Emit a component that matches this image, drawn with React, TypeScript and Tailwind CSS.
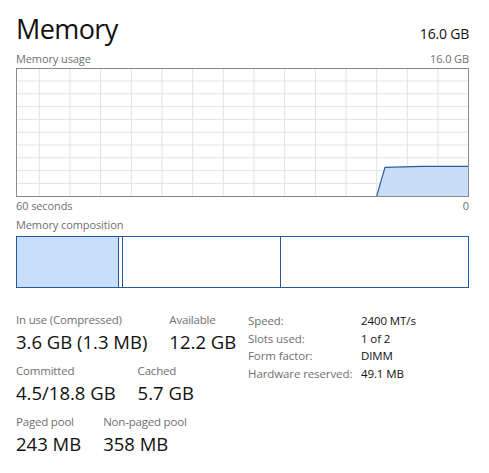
import React from "react";

const font = { fontFamily: '"Open Sans", "Noto Sans", sans-serif' };

function Chart() {
  const vx: number[] = [];
  for (let i = 0; i < 15; i++) vx.push(22.3 + 30.67 * i);
  const hy: number[] = [];
  for (let i = 0; i < 9; i++) hy.push(12 + 12.8 * i);
  return (
    <div className="w-[453px] h-[129px] border border-[#8c8c8c]">
      <svg width="451" height="127" viewBox="0 0 451 127" className="block">
        {vx.map((x) => (
          <line key={"v" + x} x1={x} y1={0} x2={x} y2={127} stroke="#e3e3e3" strokeWidth="1" />
        ))}
        {hy.map((y) => (
          <line key={"h" + y} x1={0} y1={y} x2={451} y2={y} stroke="#e3e3e3" strokeWidth="1" />
        ))}
        <path d="M359.7 127 L368 98.3 L404.7 97.3 L451 97.3 L451 127 Z" fill="#c5dcf7" fillOpacity="0.95" />
        <path d="M359.7 127 L368 98.3 L404.7 97.3 L451 97.3" fill="none" stroke="#2a5f9e" strokeWidth="1.2" />
      </svg>
    </div>
  );
}

function Stat({ label, value }: { label: string; value: string }) {
  return (
    <div className="flex flex-col">
      <div className="text-[11.5px] leading-[16px] tracking-[-0.2px] text-[#707070]">{label}</div>
      <div className="text-[18.5px] leading-[25px] text-[#111] mt-[1px]">{value}</div>
    </div>
  );
}

export default function App() {
  return (
    <div className="w-[489px] h-[473px] bg-white px-[16px] overflow-hidden" style={font}>
      <div className="flex justify-between items-baseline pt-[11px] w-[453px]">
        <div className="text-[27px] leading-[36px] tracking-[-0.6px] text-[#111]">Memory</div>
        <div className="text-[14px] leading-[20px] tracking-[-0.2px] text-[#111]">16.0 GB</div>
      </div>
      <div className="flex justify-between w-[453px] text-[11px] leading-[16px] tracking-[-0.1px] text-[#707070] mt-[4px]">
        <span>Memory usage</span>
        <span>16.0 GB</span>
      </div>
      <div className="mt-[1px]">
        <Chart />
      </div>
      <div className="flex justify-between w-[453px] text-[11px] leading-[16px] tracking-[-0.1px] text-[#707070] mt-[1px]">
        <span>60 seconds</span>
        <span>0</span>
      </div>
      <div className="text-[11px] leading-[16px] tracking-[-0.1px] text-[#707070] mt-[3px]">Memory composition</div>
      <div className="mt-[3px] w-[453px] h-[52px] border border-[#245a97] flex">
        <div className="w-[102px] bg-[#c7dffb] border-r border-[#245a97]" />
        <div className="w-[4px] border-r border-[#245a97]" />
        <div className="w-[158px] border-r border-[#245a97]" />
        <div className="flex-1" />
      </div>
      <div className="flex items-start mt-[24px]">
        <div className="flex flex-col w-[232px]">
          <div className="flex gap-[22px]">
            <Stat label="In use (Compressed)" value="3.6 GB (1.3 MB)" />
            <Stat label="Available" value="12.2 GB" />
          </div>
          <div className="flex gap-[22px] mt-[9px]">
            <Stat label="Committed" value="4.5/18.8 GB" />
            <Stat label="Cached" value="5.7 GB" />
          </div>
          <div className="flex gap-[22px] mt-[9px]">
            <Stat label="Paged pool" value="243 MB" />
            <Stat label="Non-paged pool" value="358 MB" />
          </div>
        </div>
        <div className="grid grid-cols-[113px_auto] content-start text-[11.5px] leading-[17.7px] tracking-[-0.1px]">
          <span className="text-[#707070]">Speed:</span>
          <span className="text-[#111]">2400 MT/s</span>
          <span className="text-[#707070]">Slots used:</span>
          <span className="text-[#111]">1 of 2</span>
          <span className="text-[#707070]">Form factor:</span>
          <span className="text-[#111]">DIMM</span>
          <span className="text-[#707070]">Hardware reserved:</span>
          <span className="text-[#111]">49.1 MB</span>
        </div>
      </div>
    </div>
  );
}
